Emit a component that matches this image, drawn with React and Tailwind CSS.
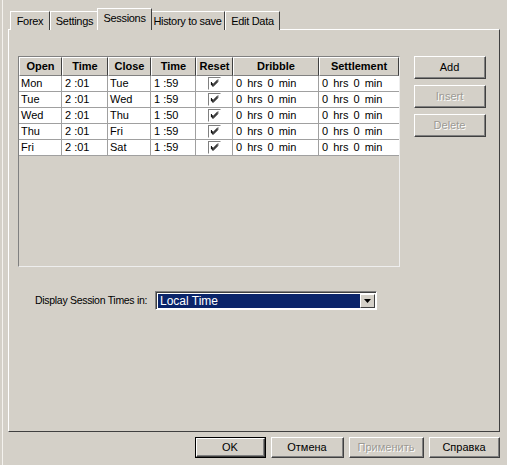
import { useState } from 'react'

const ROWS = [
  { open: 'Mon', t1: '2 :01', close: 'Tue', t2: '1 :59' },
  { open: 'Tue', t1: '2 :01', close: 'Wed', t2: '1 :59' },
  { open: 'Wed', t1: '2 :01', close: 'Thu', t2: '1 :50' },
  { open: 'Thu', t1: '2 :01', close: 'Fri', t2: '1 :59' },
  { open: 'Fri', t1: '2 :01', close: 'Sat', t2: '1 :59' },
]

const COLS = [
  { name: 'Open', w: 'w-[43px]' },
  { name: 'Time', w: 'w-[46px]' },
  { name: 'Close', w: 'w-[43px]' },
  { name: 'Time', w: 'w-[45px]' },
  { name: 'Reset', w: 'w-[37px]' },
  { name: 'Dribble', w: 'w-[86px]' },
  { name: 'Settlement', w: 'w-[80px]' },
]

const TABS = [
  { name: 'Forex', w: 'w-[40px]' },
  { name: 'Settings', w: 'w-[49px]' },
  { name: 'Sessions', w: 'w-[55px]' },
  { name: 'History to save', w: 'w-[75px]' },
  { name: 'Edit Data', w: 'w-[55px]' },
]

// classic raised button
function Btn({ children, disabled, isDefault, className = '' }) {
  return (
    <button
      className={`flex items-center justify-center bg-[#d4d0c8] ${
        isDefault ? 'border border-black' : ''
      } ${className}`}
    >
      <span className="flex h-full w-full items-center justify-center border-t border-l border-white border-r border-b border-r-[#404040] border-b-[#404040]">
        <span
          className={`flex h-full w-full items-center justify-center border-r border-b border-[#808080] ${
            disabled ? 'text-[#9c9a94] [text-shadow:1px_1px_0_#fff]' : 'text-black'
          }`}
        >
          {children}
        </span>
      </span>
    </button>
  )
}

function Check() {
  return (
    <span className="flex h-[13px] w-[13px] items-center justify-center border-t border-l border-[#808080] border-r border-b border-r-white border-b-white bg-white">
      <svg width="9" height="9" viewBox="0 0 9 9">
        <path d="M1 3 L3 5.5 L8 0.5 M1 4 L3 6.5 L8 1.5 M1 5 L3 7.5 L8 2.5" stroke="#000" strokeWidth="1" fill="none" />
      </svg>
    </span>
  )
}

export default function App() {
  const [tab, setTab] = useState('Sessions')

  return (
    <div
      className="relative h-[465px] w-[507px] overflow-hidden bg-[#d4d0c8] text-[11px] text-black"
      style={{ fontFamily: '"Liberation Sans", Arial, sans-serif' }}
    >
      {/* left window edge */}
      <div className="absolute left-[2px] top-0 h-full w-px bg-[#f4f2ee]" />

      <div className="pl-[8px] pr-[7px] pt-[8px]">
        {/* Tabs */}
        <div className="flex h-[22px] items-end pl-[2px]">
          {TABS.map((t) => {
            const active = t.name === tab
            return (
              <button
                key={t.name}
                onClick={() => setTab(t.name)}
                className={`${t.w} relative flex shrink-0 items-center justify-center whitespace-nowrap border-t border-l border-white border-r border-r-[#404040] bg-[#d4d0c8] tracking-[-0.3px] ${
                  active ? 'z-10 -mx-[2px] h-[22px] pb-[3px]' : 'h-[19px]'
                }`}
              >
                {t.name}
              </button>
            )
          })}
        </div>

        {/* Tab panel */}
        <div className="-mt-px flex h-[403px] flex-col border-t border-l border-white border-r border-b border-r-[#404040] border-b-[#404040] pl-[9px] pr-[14px] pt-[26px]">
          <div className="flex gap-[14px]">
            {/* Grid */}
            <div className="h-[211px] w-[382px] border-t border-l border-[#808080] border-r border-b border-r-[#eeeeee] border-b-[#eeeeee]">
              <div className="flex">
                {COLS.map((c, i) => (
                  <div
                    key={i}
                    className={`${c.w} flex h-[19px] items-center justify-center border-t border-l border-white border-r border-b border-r-[#404040] border-b-[#808080] font-bold`}
                  >
                    {c.name}
                  </div>
                ))}
              </div>
              {ROWS.map((r, i) => (
                <div key={i} className="flex h-[16px] bg-white">
                  <div className="w-[43px] border-r border-b border-[#a0a0a0] pl-[2px] leading-[15px]">{r.open}</div>
                  <div className="w-[46px] border-r border-b border-[#a0a0a0] pl-[3px] leading-[15px]">{r.t1}</div>
                  <div className="w-[43px] border-r border-b border-[#a0a0a0] pl-[2px] leading-[15px]">{r.close}</div>
                  <div className="w-[45px] border-r border-b border-[#a0a0a0] pl-[3px] leading-[15px]">{r.t2}</div>
                  <div className="flex w-[37px] items-center justify-center border-r border-b border-[#a0a0a0]">
                    <Check />
                  </div>
                  <div className="w-[86px] border-r border-b border-[#a0a0a0] pl-[3px] leading-[15px] [word-spacing:2px]">0 hrs 0 min</div>
                  <div className="w-[80px] border-b border-[#a0a0a0] pl-[3px] leading-[15px] [word-spacing:2px]">0 hrs 0 min</div>
                </div>
              ))}
            </div>

            {/* Side buttons */}
            <div className="flex flex-col gap-[6px]">
              <Btn className="h-[23px] w-[72px]">Add</Btn>
              <Btn disabled className="h-[23px] w-[72px]">Insert</Btn>
              <Btn disabled className="h-[23px] w-[72px]">Delete</Btn>
            </div>
          </div>

          {/* Display session times */}
          <div className="mt-[24px] flex items-center pl-[17px]">
            <span className="w-[120px] shrink-0 whitespace-nowrap text-[10.5px] tracking-[-0.3px]">Display Session Times in:</span>
            <div className="flex h-[19px] w-[222px] border-t border-l border-[#808080] border-r border-b border-r-white border-b-white">
              <div className="flex flex-1 items-center border-t border-l border-[#404040] bg-white p-[1px]">
                <div className="flex h-full flex-1 items-center bg-[#0a246a] pl-[2px] text-[12px] text-white">
                  Local Time
                </div>
                <div className="flex h-full w-[15px] items-center justify-center border-t border-l border-white border-r border-b border-r-[#404040] border-b-[#404040] bg-[#d4d0c8]">
                  <svg width="7" height="4" viewBox="0 0 7 4">
                    <path d="M0 0 H7 L3.5 4 Z" fill="#000" />
                  </svg>
                </div>
              </div>
            </div>
          </div>
        </div>

        {/* Bottom buttons */}
        <div className="mt-[5px] flex justify-end gap-[5px]">
          <Btn isDefault className="h-[21px] w-[71px]">OK</Btn>
          <Btn className="h-[21px] w-[73px]">Отмена</Btn>
          <Btn disabled className="h-[21px] w-[75px]">Применить</Btn>
          <Btn className="h-[21px] w-[71px]">Справка</Btn>
        </div>
      </div>
    </div>
  )
}
